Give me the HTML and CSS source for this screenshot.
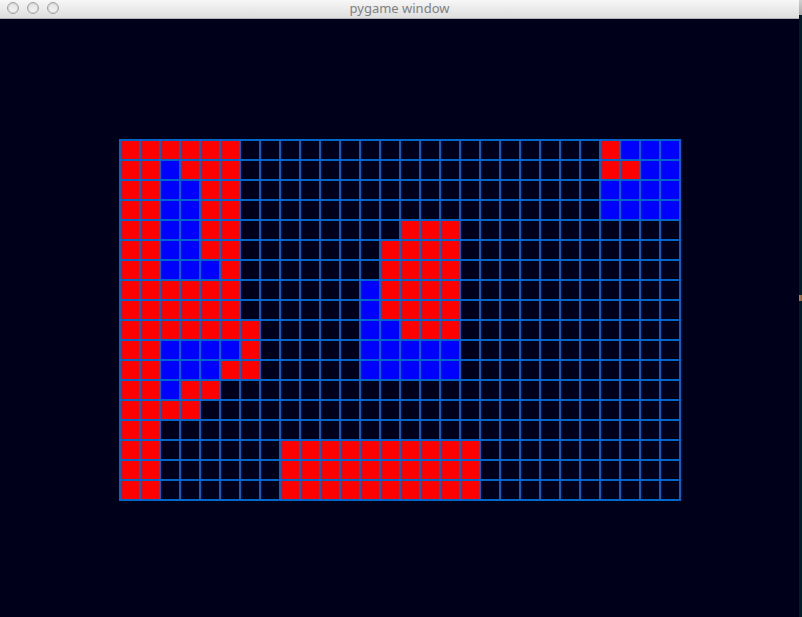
FILE: index.html
```html
<!DOCTYPE html>
<html lang="en">
<head>
<meta charset="utf-8">
<title>pygame window</title>
<link rel="stylesheet" href="styles.css">
</head>
<body>
<main class="window">
  <header class="titlebar">
    <div class="controls">
      <button class="control" type="button" aria-label="Close"></button>
      <button class="control" type="button" aria-label="Minimize"></button>
      <button class="control" type="button" aria-label="Zoom"></button>
    </div>
    <h1 class="title">pygame window</h1>
  </header>
  <section class="stage">
    <div class="board" id="board"></div>
  </section>
</main>
<aside class="desktop">
  <div class="desktop-top"></div>
  <div class="desktop-mark"></div>
</aside>
<script src="board.js"></script>
</body>
</html>
```
FILE: styles.css
```css
* {
  box-sizing: border-box;
}

body {
  margin: 0;
  min-height: 100vh;
  display: flex;
  background: #00001a;
  font-family: "Noto Sans", "Open Sans", sans-serif;
}

.window {
  flex: 1;
  display: flex;
  flex-direction: column;
}

.titlebar {
  display: grid;
  grid-template-columns: 1fr auto 1fr;
  align-items: center;
  height: 19px;
  padding: 0 7px 2px;
  background: linear-gradient(#f7f7f7, #dedede);
  border-bottom: 1px solid #b4b4b4;
}

.controls {
  display: flex;
  gap: 8px;
}

.control {
  width: 12px;
  height: 12px;
  padding: 0;
  border: 1px solid #a2a2a2;
  border-radius: 50%;
  background: linear-gradient(#e2e2e2, #f6f6f6);
  box-shadow: inset 0 0 1px 1px #d2d2d2;
}

.title {
  margin: 0;
  font-size: 13px;
  line-height: 16px;
  font-weight: 400;
  color: #808080;
}

.stage {
  flex: 1;
  display: flex;
  justify-content: center;
  align-items: flex-start;
  padding: 120px 0 0 1px;
}

.board {
  display: grid;
  grid-template-columns: repeat(28, 18px);
  grid-auto-rows: 18px;
  gap: 2px;
  padding: 2px;
  background: #0066cc;
}

.cell {
  background: #00001a;
}

.cell-red {
  background: #ff0000;
}

.cell-blue {
  background: #0000ff;
}

.desktop {
  width: 3px;
  background: #001c26;
}

.desktop-top {
  height: 15px;
  background: linear-gradient(#d0d0d0, #a8a8a8);
}

.desktop-mark {
  height: 6px;
  margin-top: 280px;
  background: linear-gradient(90deg, #8a8f94, #a8703c, #2c6fa0);
}
```
FILE: board.js
```js
// One string per row: R is red, B is blue, a dot is empty.
const rows = [
  "RRRRRR..................RBBB",
  "RRBRRR..................RRBB",
  "RRBBRR..................BBBB",
  "RRBBRR..................BBBB",
  "RRBBRR........RRR...........",
  "RRBBRR.......RRRR...........",
  "RRBBBR.......RRRR...........",
  "RRRRRR......BRRRR...........",
  "RRRRRR......BRRRR...........",
  "RRRRRRR.....BBRRR...........",
  "RRBBBBR.....BBBBB...........",
  "RRBBBRR.....BBBBB...........",
  "RRBRR.......................",
  "RRRR........................",
  "RR..........................",
  "RR......RRRRRRRRRR..........",
  "RR......RRRRRRRRRR..........",
  "RR......RRRRRRRRRR.........."
];
const kinds = { R: "cell cell-red", B: "cell cell-blue", ".": "cell" };
const board = document.getElementById("board");
for (const row of rows) {
  for (const mark of row) {
    const cell = document.createElement("div");
    cell.className = kinds[mark];
    board.append(cell);
  }
}
```
